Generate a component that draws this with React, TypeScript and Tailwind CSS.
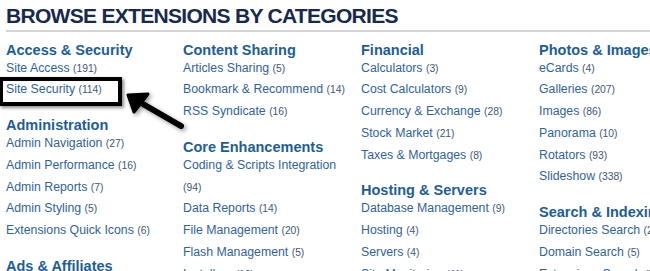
type Item = { name: string; count: string };
type Section = { title: string; items: Item[] };

const columns: Section[][] = [
  [
    {
      title: "Access & Security",
      items: [
        { name: "Site Access", count: "191" },
        { name: "Site Security", count: "114" },
      ],
    },
    {
      title: "Administration",
      items: [
        { name: "Admin Navigation", count: "27" },
        { name: "Admin Performance", count: "16" },
        { name: "Admin Reports", count: "7" },
        { name: "Admin Styling", count: "5" },
        { name: "Extensions Quick Icons", count: "6" },
      ],
    },
    {
      title: "Ads & Affiliates",
      items: [
        { name: "Advertising", count: "30" },
        { name: "Affiliate Systems", count: "12" },
      ],
    },
  ],
  [
    {
      title: "Content Sharing",
      items: [
        { name: "Articles Sharing", count: "5" },
        { name: "Bookmark & Recommend", count: "14" },
        { name: "RSS Syndicate", count: "16" },
      ],
    },
    {
      title: "Core Enhancements",
      items: [
        { name: "Coding & Scripts Integration", count: "94" },
        { name: "Data Reports", count: "14" },
        { name: "File Management", count: "20" },
        { name: "Flash Management", count: "5" },
        { name: "Installers", count: "12" },
      ],
    },
  ],
  [
    {
      title: "Financial",
      items: [
        { name: "Calculators", count: "3" },
        { name: "Cost Calculators", count: "9" },
        { name: "Currency & Exchange", count: "28" },
        { name: "Stock Market", count: "21" },
        { name: "Taxes & Mortgages", count: "8" },
      ],
    },
    {
      title: "Hosting & Servers",
      items: [
        { name: "Database Management", count: "9" },
        { name: "Hosting", count: "4" },
        { name: "Servers", count: "4" },
        { name: "Site Monitoring", count: "11" },
      ],
    },
  ],
  [
    {
      title: "Photos & Images",
      items: [
        { name: "eCards", count: "4" },
        { name: "Galleries", count: "207" },
        { name: "Images", count: "86" },
        { name: "Panorama", count: "10" },
        { name: "Rotators", count: "93" },
        { name: "Slideshow", count: "338" },
      ],
    },
    {
      title: "Search & Indexing",
      items: [
        { name: "Directories Search", count: "23" },
        { name: "Domain Search", count: "5" },
        { name: "Extensions Search", count: "7" },
      ],
    },
  ],
];

function CategorySection({ section }: { section: Section }) {
  return (
    <div className="mb-[17px]">
      <h3 className="text-[14.5px] leading-[15px] font-bold text-[#1c5d9b] whitespace-nowrap">
        {section.title}
      </h3>
      <ul>
        {section.items.map((item) => (
          <li key={item.name} className="leading-[21.75px] text-[12.3px] text-[#2f63a0]">
            {item.name} <span className="text-[10.3px] text-[#40577a]">({item.count})</span>
          </li>
        ))}
      </ul>
    </div>
  );
}

export default function App() {
  return (
    <div className="relative w-[650px] h-[271px] overflow-hidden bg-white font-['Liberation_Sans',Arial,sans-serif]">
      <div className="w-[760px] pl-[6px] pt-[5px]">
        <h1 className="text-[21px] leading-[22px] font-bold text-[#17294d] tracking-[-0.7px]">
          BROWSE EXTENSIONS BY CATEGORIES
        </h1>
        <div className="mt-[3px] h-[2px] bg-[#d4d4d4]" />
        <div className="grid grid-cols-[177px_178px_178px_178px] pt-[10.5px]">
          {columns.map((col, i) => (
            <div key={i} className="w-[168px]">
              {col.map((s) => (
                <CategorySection key={s.title} section={s} />
              ))}
            </div>
          ))}
        </div>
      </div>

      {/* highlight box round Site Security */}
      <div className="absolute left-[-1px] top-[77px] w-[123px] h-[29px] border-[4px] border-black shadow-[2px_2px_3px_rgba(0,0,0,0.45)]" />

      <svg
        className="absolute left-[120px] top-[85px] drop-shadow-[2px_2px_2px_rgba(0,0,0,0.4)]"
        width="70"
        height="50"
        viewBox="120 85 70 50"
      >
        <line x1="181" y1="126" x2="136" y2="100" stroke="#000" strokeWidth="6" strokeLinecap="round" />
        <polygon points="128,95 148,94 134,112" fill="#000" stroke="#000" strokeWidth="3" strokeLinejoin="round" />
      </svg>
    </div>
  );
}
